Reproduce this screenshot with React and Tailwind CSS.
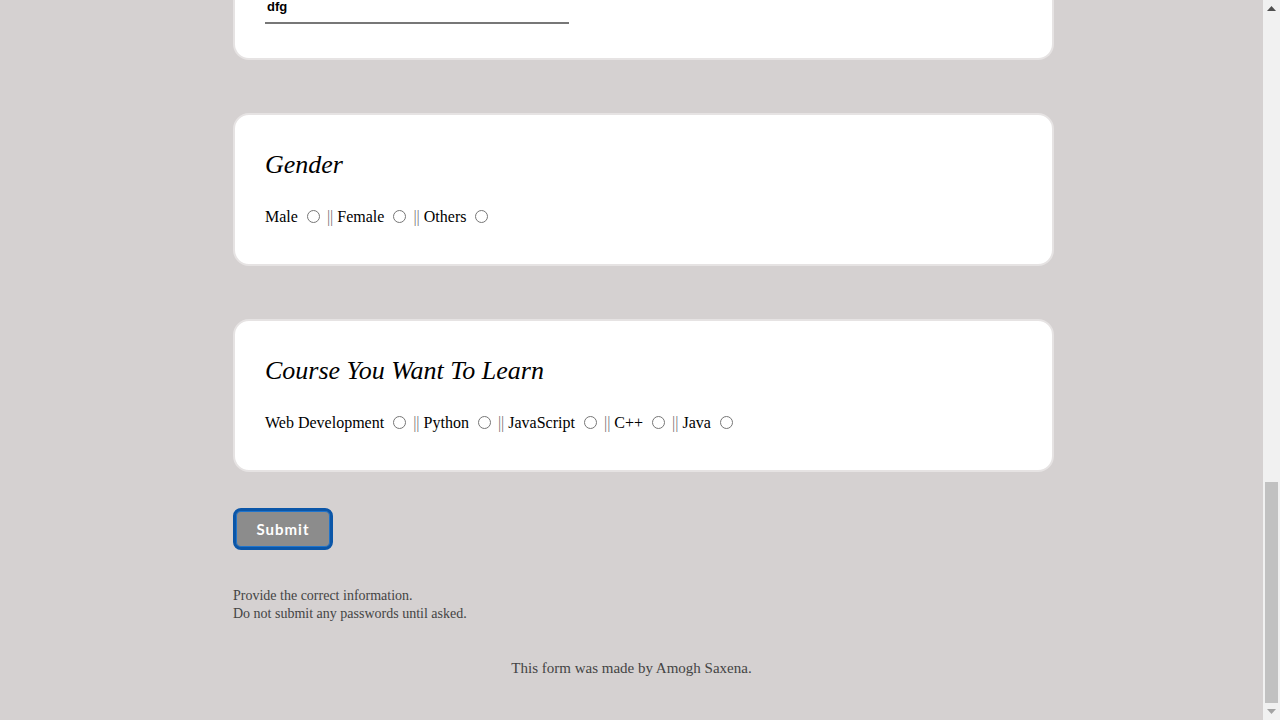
import React from 'react';

const serif = { fontFamily: '"Liberation Serif", "Times New Roman", serif' };

const Card = ({ title, options, name }) => (
    <div className="w-[821px] rounded-[16px] border-2 border-[#e6e3e3] bg-white px-[30px] pt-[37px] pb-[38px]">
        <h2 className="text-[26px] italic leading-none text-black" style={serif}>{title}</h2>
        <div className="mt-[31px] mb-[1px] flex items-center text-[16px] leading-none text-black" style={serif}>
            {options.map((opt, i) => (
                <React.Fragment key={opt}>
                    {i > 0 && <span className="ml-[4px] mr-[4px] text-[#777]">||</span>}
                    <span>{opt}</span>
                    <input type="radio" name={name} className="ml-[9px] mr-[3px] h-[13px] w-[13px] -translate-y-[1px]" />
                </React.Fragment>
            ))}
        </div>
    </div>
);

export default function App() {
    return (
        <div className="flex h-[720px] w-[1280px] overflow-hidden bg-[#d5d1d1]">
            <main className="flex w-[1263px] flex-col">
                <div className="ml-[233px] flex flex-col">
                    {/* tail of the previous card */}
                    <div className="h-[60px] w-[821px] rounded-b-[16px] border-2 border-t-0 border-[#e6e3e3] bg-white px-[30px]">
                        <div className="w-[304px] border-b-2 border-[#777] pb-[8px] pl-[2px] text-[13px] font-bold leading-[14px] text-black" style={{ fontFamily: '"Liberation Sans", Arial, sans-serif' }}>
                            dfg
                        </div>
                    </div>

                    <div className="mt-[53px]">
                        <Card title="Gender" name="gender" options={['Male', 'Female', 'Others']} />
                    </div>
                    <div className="mt-[53px]">
                        <Card title="Course You Want To Learn" name="course" options={['Web Development', 'Python', 'JavaScript', 'C++', 'Java']} />
                    </div>

                    <button className="mt-[36px] h-[42px] w-[100px] rounded-[8px] border-[3px] border-[#0b56a8] bg-[#8c8c8c] text-[15px] font-bold tracking-[1px] text-white shadow-[inset_0_0_0_1px_#1f74cc]" style={{ fontFamily: 'Lato, "Open Sans", sans-serif' }}>
                        Submit
                    </button>

                    <div className="mt-[37px] text-[14px] leading-[18px] text-[#444]" style={serif}>
                        <p>Provide the correct information.</p>
                        <p>Do not submit any passwords until asked.</p>
                    </div>
                </div>

                <p className="mt-[34px] text-center text-[15px] text-[#444]" style={serif}>This form was made by Amogh Saxena.</p>
            </main>

            {/* scrollbar */}
            <div className="flex w-[17px] flex-col bg-[#f1f1f1]">
                <div className="flex h-[17px] items-center justify-center">
                    <svg width="9" height="5" viewBox="0 0 9 5"><path d="M0 5 L4.5 0 L9 5 Z" fill="#505050" /></svg>
                </div>
                <div className="flex-1" />
                <div className="mx-[2px] h-[221px] bg-[#c1c1c1]" />
                <div className="flex h-[17px] items-center justify-center">
                    <svg width="9" height="5" viewBox="0 0 9 5"><path d="M0 0 L9 0 L4.5 5 Z" fill="#a3a3a3" /></svg>
                </div>
            </div>
        </div>
    );
}
